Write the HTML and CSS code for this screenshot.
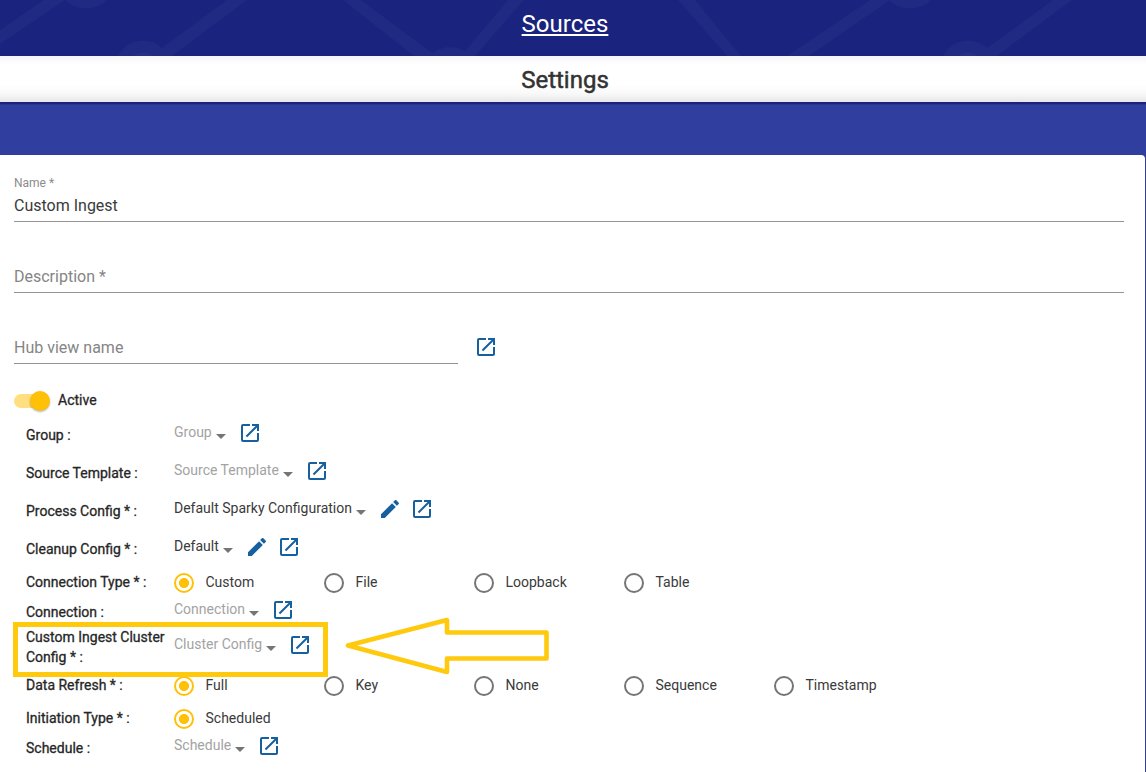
FILE: index.html
```html
<!DOCTYPE html>
<html lang="en">
<head>
<meta charset="utf-8">
<title>Settings</title>
<link rel="stylesheet" href="styles.css">
</head>
<body>
<svg class="defs" width="0" height="0">
  <symbol id="open" viewBox="0 0 24 24"><path d="M19 19H5V5h7V3H5a2 2 0 0 0-2 2v14a2 2 0 0 0 2 2h14c1.100 0 2-.9 2-2v-7h-2v7zM14 3v2h3.590l-9.830 9.830 1.410 1.410L19 6.410V10h2V3h-7z"/></symbol>
  <symbol id="edit" viewBox="0 0 24 24"><path d="M3 17.250V21h3.750L17.810 9.940l-3.750-3.750L3 17.250zM20.710 7.040c.39-.39.39-1.020 0-1.410l-2.340-2.340c-.39-.39-1.020-.39-1.410 0l-1.830 1.830 3.750 3.750 1.830-1.830z"/></symbol>
</svg>
<header class="banner">
  <svg class="pattern" width="1146" height="56" viewBox="0 0 1146 56">
    <path d="M0 30L44 0H65L0 44zM151 56L227 0H247L172 56zM343 0H361L436 56H414zM461 56L508 0H524L475 56zM678 0H695L741 56H727zM787 56L870 0H890L809 56zM976 56L1053 0H1072L997 56z"/>
    <circle cx="86" cy="-21.500" r="30"/><circle cx="910" cy="-21.500" r="30"/>
    <circle cx="143" cy="68" r="27.500"/><circle cx="968" cy="68" r="27.500"/>
    <circle cx="450" cy="74" r="27"/>
    <g class="core"><circle cx="143" cy="67.500" r="15"/><circle cx="968" cy="67.500" r="15"/></g>
  </svg>
  <a class="crumb">Sources</a>
</header>
<div class="titlebar"><h1>Settings</h1></div>
<div class="band"></div>
<main class="card">
  <div class="field named"><span class="hint">Name *</span><span class="val">Custom Ingest</span></div>
  <div class="field">Description *</div>
  <div class="hub"><div class="field">Hub view name</div><svg class="ic"><use href="#open"/></svg></div>
  <div class="toggle"><span class="track"><i class="knob"></i></span><span class="strong">Active</span></div>
  <div class="rows">
    <div class="row h38"><label>Group :</label><div class="sel"><span class="ph">Group</span><i class="caret"></i><svg class="ic"><use href="#open"/></svg></div></div>
    <div class="row h38"><label>Source Template :</label><div class="sel"><span class="ph">Source Template</span><i class="caret"></i><svg class="ic"><use href="#open"/></svg></div></div>
    <div class="row h38"><label>Process Config * :</label><div class="sel"><span>Default Sparky Configuration</span><i class="caret"></i><svg class="ic"><use href="#edit"/></svg><svg class="ic"><use href="#open"/></svg></div></div>
    <div class="row h38"><label>Cleanup Config * :</label><div class="sel"><span>Default</span><i class="caret"></i><svg class="ic"><use href="#edit"/></svg><svg class="ic"><use href="#open"/></svg></div></div>
    <div class="row h29"><label>Connection Type * :</label><div class="radios"><span class="opt on">Custom</span><span class="opt">File</span><span class="opt">Loopback</span><span class="opt">Table</span></div></div>
    <div class="row h30"><label>Connection :</label><div class="sel"><span class="ph">Connection</span><i class="caret"></i><svg class="ic"><use href="#open"/></svg></div></div>
    <div class="row h40 marked"><label>Custom Ingest Cluster<br>Config * :</label><div class="sel"><span class="ph">Cluster Config</span><i class="caret"></i><svg class="ic"><use href="#open"/></svg></div>
      <svg class="arrow" width="206" height="60" viewBox="0 0 206 60"><path d="M3 29.500L102 4V16.500H201.500V42.500H102V56Z"/></svg>
    </div>
    <div class="row h36"><label>Data Refresh * :</label><div class="radios"><span class="opt on">Full</span><span class="opt">Key</span><span class="opt">None</span><span class="opt">Sequence</span><span class="opt">Timestamp</span></div></div>
    <div class="row h30"><label>Initiation Type * :</label><div class="radios"><span class="opt on">Scheduled</span></div></div>
    <div class="row h30"><label>Schedule :</label><div class="sel"><span class="ph">Schedule</span><i class="caret"></i><svg class="ic"><use href="#open"/></svg></div></div>
  </div>
</main>
</body>
</html>
```
FILE: styles.css
```css
*, *::before { box-sizing: border-box; }
body { margin: 0; height: 772px; overflow: hidden; background: #303e9f; font: 14px/20px Roboto, sans-serif; color: rgba(0,0,0,.87); display: flex; flex-direction: column; }
.defs { position: absolute; }
.banner { position: relative; height: 56px; background: #1a237e; display: flex; justify-content: center; padding: 8px 16px 0 0; }
.pattern { position: absolute; left: 0; top: 0; fill: #202a82; }
.core { fill: #262f86; }
.crumb { position: relative; color: #fff; font-size: 24px; line-height: 32px; text-decoration: underline; }
.titlebar { height: 48px; border-bottom: 2px solid #1a237e; background: linear-gradient(#f6f6f6, #fff 9px, #fff 29px, #f8f8f8 38px, #e6e6e6 46px); display: flex; justify-content: center; align-items: center; padding-right: 16px; }
h1 { margin: 0; font-size: 24px; line-height: 32px; font-weight: 400; color: #333; -webkit-text-stroke: .5px #333; padding-top: 2px; }
.band { height: 51px; border-top: 1px solid #2d3685; background: #303e9f; }
.card { flex: 1; margin-right: 1px; background: #fff; border-top-right-radius: 4px; padding: 16px 21px 0 14px; display: flex; flex-direction: column; }
.field { height: 51px; margin-bottom: 20px; border-bottom: 1px solid #949494; font-size: 16px; color: #858585; display: flex; flex-direction: column; justify-content: flex-end; padding-bottom: 5px; }
.field .hint { font-size: 12px; line-height: 16px; color: #8c8c8c; margin-bottom: 5px; }
.field .val { color: #3a3a3a; }
.hub { display: flex; gap: 16px; }
.hub .field { width: 444px; }
.hub .ic { margin-top: 22px; }
.ic { width: 24px; height: 24px; flex: none; fill: #17609f; }
.toggle { display: flex; align-items: center; height: 20px; margin-top: 7px; gap: 8px; }
.toggle .strong { margin-top: -2px; }
.track { position: relative; width: 36px; height: 14px; border-radius: 7px; background: linear-gradient(90deg, #ffdf7f 30px, transparent 30px); }
.knob { position: absolute; right: 0; top: -3px; width: 20px; height: 20px; border-radius: 50%; background: #ffc107; box-shadow: 0 1px 2px rgba(0,0,0,.3); }
.strong, label { color: #262626; -webkit-text-stroke: .3px #262626; }
.rows { margin-top: 5px; padding-left: 12px; }
.row { position: relative; display: grid; grid-template-columns: 148px 1fr; align-items: center; }
.h29 { height: 29px; } .h30 { height: 30px; } .h36 { height: 36px; } .h38 { height: 38px; } .h40 { height: 40px; }
.h29 > * { margin-top: -1px; }
.sel { display: flex; align-items: center; height: 24px; margin-top: -4px; }
.sel > span { margin-top: -2px; color: #3a3a3a; }
.sel > .ph { color: #a3a3a3; }
.caret { border: 5px solid transparent; border-top-color: #757575; border-bottom: 0; margin: 6px 12px 0 4px; }
.ic + .ic { margin-left: 8px; }
.radios { display: flex; }
.opt { width: 150px; display: flex; align-items: center; gap: 11.500px; color: #3a3a3a; }
.opt::before { content: ""; width: 20px; height: 20px; flex: none; border: 2px solid #757575; border-radius: 50%; position: relative; top: 1px; }
.opt.on::before { border-color: #ffc107; background: radial-gradient(circle, #ffc107 4.700px, transparent 5.300px); }
.marked::before { content: ""; position: absolute; left: -13px; top: -5px; width: 315px; height: 55px; border: 5px solid #ffc90e; z-index: 1; }
.arrow { position: absolute; left: 319px; top: -11px; fill: none; stroke: #ffc90e; stroke-width: 4.600; stroke-linejoin: round; }
```
